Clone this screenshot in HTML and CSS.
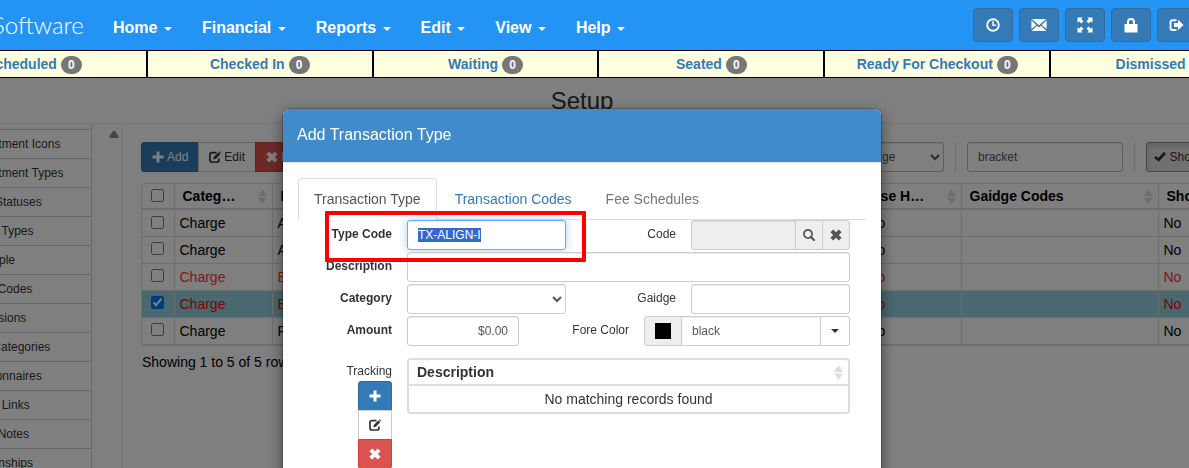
FILE: index.html
```
<!DOCTYPE html>
<html lang="en">
<head>
	<meta charset="UTF-8">
	<title>Setup</title>
	<link rel="stylesheet" href="styles.css">
</head>
<body>
<svg class="sprite" aria-hidden="true">
	<symbol id="plus" viewBox="0 0 12 12"><path d="M4.5 0.5h3v4h4v3h-4v4h-3v-4h-4v-3h4z"/></symbol>
	<symbol id="edit" viewBox="0 0 12 12"><path d="M7.6 1.6H3Q1 1.6 1 3.600V9Q1 11 3 11H8Q10 11 10 9V7.500" fill="none" stroke="currentColor" stroke-width="1.700"/><path d="M4.300 8.400l.6-2.600 4.400-4.400 1.900 1.900-4.400 4.400zM9.800.9l.7-.7 1.500 1.400-.7.9z"/></symbol>
	<symbol id="remove" viewBox="0 0 12 12"><path d="M3.200.4L6 3.200 8.800.4l2.800 2.800L8.800 6l2.800 2.800-2.800 2.800L6 8.800l-2.800 2.800L.4 8.800 3.200 6 .4 3.200z"/></symbol>
	<symbol id="search" viewBox="0 0 12 12"><path d="M5 .9a4.100 4.100 0 1 0 0 8.200A4.100 4.100 0 1 0 5 .9z" fill="none" stroke="currentColor" stroke-width="1.700"/><path d="M8 8l3.200 3.200" stroke="currentColor" stroke-width="2.200" stroke-linecap="round"/></symbol>
	<symbol id="ok" viewBox="0 0 12 12"><path d="M0 6.800l1.800-1.800 2.500 2L9.900 1 12 2.700 4.700 10.700z"/></symbol>
	<symbol id="clock" viewBox="0 0 14 14"><circle cx="7" cy="7" r="5.800" fill="none" stroke="currentColor" stroke-width="1.900"/><path d="M7 3.300V7.200H10" fill="none" stroke="currentColor" stroke-width="1.400"/></symbol>
	<symbol id="mail" viewBox="0 0 16 14"><path d="M.8 1h14.400L8 7.300zM.4 2.200L5.300 7 .4 11zM15.600 2.200L10.700 7l4.900 4zM6 7.700l2 1.700 2-1.700 5.400 5.300H.6z"/></symbol>
	<symbol id="full" viewBox="0 0 16 16"><path d="M.5.5h5.200L4.200 2l2.300 2.300-2.200 2.200L2 4.200.5 5.700zM15.500.5v5.200L14 4.200l-2.300 2.300-2.200-2.200L11.800 2 10.300.5zM.5 15.500v-5.200L2 11.800l2.300-2.300 2.200 2.200L4.200 14l1.500 1.500zM15.500 15.500h-5.200l1.500-1.500-2.300-2.300 2.200-2.200 2.300 2.300 1.500-1.500z"/></symbol>
	<symbol id="lock" viewBox="0 0 14 15"><path d="M3 6V4a4 4 0 0 1 8 0v2h2.500v8.500H.5V6zM5 6h4V4a2 2 0 0 0-4 0z" fill-rule="evenodd"/></symbol>
	<symbol id="logout" viewBox="0 0 14 14"><path d="M7 2.200H3Q1 2.200 1 4.200V10Q1 12 3 12H7" fill="none" stroke="currentColor" stroke-width="1.900"/><path d="M4.500 5h4V1.700L14 7l-5.500 5.300V9h-4z"/></symbol>
	<symbol id="sort" viewBox="0 0 9 15"><path d="M4.500 0L9 7H0zM0 8.500h9L4.500 15z"/></symbol>
</svg>

<header class="top">
	<nav class="navbar">
		<a class="brand" href="#">Software</a>
		<ul class="menu">
			<li><a href="#">Home <b class="caret"></b></a></li>
			<li><a href="#">Financial <b class="caret"></b></a></li>
			<li><a href="#">Reports <b class="caret"></b></a></li>
			<li><a href="#">Edit <b class="caret"></b></a></li>
			<li><a href="#">View <b class="caret"></b></a></li>
			<li><a href="#">Help <b class="caret"></b></a></li>
		</ul>
		<div class="tools">
			<button type="button" class="tool" aria-label="Time clock"><svg width="14" height="14"><use href="#clock"/></svg></button>
			<button type="button" class="tool" aria-label="Messages"><svg width="16" height="14"><use href="#mail"/></svg></button>
			<button type="button" class="tool" aria-label="Full screen"><svg width="16" height="16"><use href="#full"/></svg></button>
			<button type="button" class="tool" aria-label="Lock"><svg width="14" height="15"><use href="#lock"/></svg></button>
			<button type="button" class="tool tool-wide"><svg width="15" height="14"><use href="#logout"/></svg> Logout</button>
		</div>
	</nav>
	<ul class="status">
		<li><a href="#">Scheduled <span class="badge">0</span></a></li>
		<li><a href="#">Checked In <span class="badge">0</span></a></li>
		<li><a href="#">Waiting <span class="badge">0</span></a></li>
		<li><a href="#">Seated <span class="badge">0</span></a></li>
		<li><a href="#">Ready For Checkout <span class="badge">0</span></a></li>
		<li><a href="#">Dismissed <span class="badge">0</span></a></li>
	</ul>
</header>

<main class="page">
	<h1 class="page-title">Setup</h1>
	<div class="columns">
		<ul class="side">
			<li><a href="#">Appointment Icons</a></li>
			<li><a href="#">Appointment Types</a></li>
			<li><a href="#">Claim Statuses</a></li>
			<li><a href="#">Patient Types</a></li>
			<li><a href="#">All People</a></li>
			<li><a href="#">Recall Codes</a></li>
			<li><a href="#">Permissions</a></li>
			<li><a href="#">Form Categories</a></li>
			<li><a href="#">Questionnaires</a></li>
			<li><a href="#">Patient Links</a></li>
			<li><a href="#">Recall Notes</a></li>
			<li><a href="#">Relationships</a></li>
		</ul>
		<div class="scroll"><svg width="10" height="8" viewBox="0 0 10 8"><path d="M4 1.200Q5-.2 6 1.200L9.600 6Q10 8 8.500 8H1.500Q0 8 .4 6z"/></svg></div>
		<section class="content">
			<div class="toolbar">
				<div class="btn-group">
					<button type="button" class="btn btn-primary"><svg width="12" height="12"><use href="#plus"/></svg> Add</button>
					<button type="button" class="btn"><svg width="12" height="12"><use href="#edit"/></svg> Edit</button>
					<button type="button" class="btn btn-danger"><svg width="12" height="12"><use href="#remove"/></svg> Delete</button>
				</div>
				<div class="filters">
					<select class="field filter-type" aria-label="Category filter"><option>Charge</option></select>
					<i class="divider"></i>
					<input class="field filter-text" type="text" value="bracket" aria-label="Search">
					<i class="divider"></i>
					<button type="button" class="btn btn-on"><svg width="12" height="12"><use href="#ok"/></svg> Show All</button>
				</div>
			</div>
			<div class="table-box">
				<table class="grid">
					<colgroup>
						<col class="c-check"><col class="c-cat"><col><col class="c-use"><col class="c-gaidge"><col class="c-show">
					</colgroup>
					<thead>
						<tr>
							<th class="check"><input type="checkbox" aria-label="Select all"></th>
							<th><div class="th">Categ… <svg width="9" height="15"><use href="#sort"/></svg></div></th>
							<th><div class="th">Description</div></th>
							<th><div class="th">Use H… <svg width="9" height="15"><use href="#sort"/></svg></div></th>
							<th><div class="th">Gaidge Codes <svg width="9" height="15"><use href="#sort"/></svg></div></th>
							<th><div class="th">Show</div></th>
						</tr>
					</thead>
					<tbody>
						<tr>
							<td class="check"><input type="checkbox" aria-label="Select row 1"></td>
							<td>Charge</td><td>Add Bracket</td><td>No</td><td></td><td>No</td>
						</tr>
						<tr>
							<td class="check"><input type="checkbox" aria-label="Select row 2"></td>
							<td>Charge</td><td>Add Bracket</td><td>No</td><td></td><td>No</td>
						</tr>
						<tr class="red">
							<td class="check"><input type="checkbox" aria-label="Select row 3"></td>
							<td>Charge</td><td>Bracket</td><td>No</td><td></td><td>No</td>
						</tr>
						<tr class="red selected">
							<td class="check"><input type="checkbox" checked aria-label="Select row 4"></td>
							<td>Charge</td><td>Bracket</td><td>No</td><td></td><td>No</td>
						</tr>
						<tr>
							<td class="check"><input type="checkbox" aria-label="Select row 5"></td>
							<td>Charge</td><td>Fix Bracket</td><td>No</td><td></td><td>No</td>
						</tr>
					</tbody>
				</table>
			</div>
			<p class="paging">Showing 1 to 5 of 5 rows</p>
		</section>
	</div>
</main>

<div class="backdrop">
	<div class="modal" role="dialog" aria-labelledby="modal-title">
		<h2 class="modal-title" id="modal-title">Add Transaction Type</h2>
		<div class="modal-body">
			<ul class="tabs">
				<li><a class="active" href="#">Transaction Type</a></li>
				<li><a href="#">Transaction Codes</a></li>
				<li><a class="off" href="#">Fee Schedules</a></li>
			</ul>
			<form class="form">
				<div class="row">
					<label class="required" for="type-code">Type Code</label>
					<div class="cells">
						<input class="field w-col" id="type-code" type="text" value="TX-ALIGN-I">
						<label for="code">Code</label>
						<div class="group w-col">
							<input class="field" id="code" type="text" disabled>
							<button type="button" class="addon" aria-label="Search code"><svg width="12" height="12"><use href="#search"/></svg></button>
							<button type="button" class="addon" aria-label="Clear code"><svg width="12" height="12"><use href="#remove"/></svg></button>
						</div>
					</div>
					<div class="mark"></div>
				</div>
				<div class="row">
					<label class="required" for="description">Description</label>
					<div class="cells"><input class="field w-full" id="description" type="text"></div>
				</div>
				<div class="row">
					<label class="required" for="category">Category</label>
					<div class="cells">
						<select class="field w-col" id="category"><option></option></select>
						<label for="gaidge">Gaidge</label>
						<input class="field w-col" id="gaidge" type="text">
					</div>
				</div>
				<div class="row">
					<label class="required" for="amount">Amount</label>
					<div class="cells">
						<input class="field amount" id="amount" type="text" value="$0.00">
						<label for="fore-color">Fore Color</label>
						<div class="group color">
							<span class="addon swatch"><i></i></span>
							<input class="field" id="fore-color" type="text" value="black">
							<button type="button" class="addon white" aria-label="Pick color"><b class="caret"></b></button>
						</div>
					</div>
				</div>
				<div class="row tracking">
					<div class="track-side">
						<span>Tracking</span>
						<div class="btn-stack">
							<button type="button" class="btn btn-primary" aria-label="Add tracking"><svg width="12" height="12"><use href="#plus"/></svg></button>
							<button type="button" class="btn" aria-label="Edit tracking"><svg width="12" height="12"><use href="#edit"/></svg></button>
							<button type="button" class="btn btn-danger" aria-label="Remove tracking"><svg width="12" height="12"><use href="#remove"/></svg></button>
						</div>
					</div>
					<div class="cells">
						<div class="table-box">
							<table class="grid">
								<thead>
									<tr><th><div class="th">Description <svg width="9" height="15"><use href="#sort"/></svg></div></th></tr>
								</thead>
								<tbody>
									<tr><td class="empty">No matching records found</td></tr>
								</tbody>
							</table>
						</div>
					</div>
				</div>
			</form>
		</div>
	</div>
</div>
<script>
	var code = document.getElementById("type-code");
	code.focus();
	code.select();
</script>
</body>
</html>
```
FILE: styles.css
```
*{
	box-sizing:border-box;
}
html,body{
	height:100%;
	overflow:hidden;
}
body{
	margin:0;
	font:14px/20px "Liberation Sans", Arial, sans-serif;
	color:#333;
	background:#fff;
}
ul,h1,h2,p{
	margin:0;
	padding:0;
}
ul{
	list-style:none;
}
a{
	color:#337ab7;
	text-decoration:none;
}
svg{
	fill:currentColor;
	flex:none;
}
button,input,select{
	font-family:inherit;
}
.sprite{
	position:absolute;
	width:0;
	height:0;
}
.caret{
	display:inline-block;
	margin-left:2px;
	vertical-align:middle;
	border-top:4px solid;
	border-left:4px solid transparent;
	border-right:4px solid transparent;
}

/* top bar */
.top{
	position:relative;
	z-index:3;
	overflow:hidden;
}
.navbar{
	display:flex;
	align-items:center;
	height:50px;
	background:#2494f4;
}
.brand{
	margin-left:-8px;
	width:106px;
	font:300 24px/50px Lato, "Liberation Sans", sans-serif;
	color:#fff;
}
.menu{
	display:flex;
}
.menu a{
	display:block;
	padding:18px 15px 12px;
	font-size:16px;
	font-weight:bold;
	color:#fff;
}
.tools{
	display:flex;
	gap:6px;
	margin-left:auto;
	margin-right:-54px;
}
.tool{
	display:flex;
	align-items:center;
	justify-content:center;
	gap:4px;
	width:40px;
	height:34px;
	padding:0;
	border:1px solid #2e6da4;
	border-radius:4px;
	background:#337ab7;
	color:#fff;
	font-size:14px;
}
.tool-wide{
	justify-content:flex-start;
	width:86px;
	padding-left:11px;
}
.status{
	display:flex;
	margin:0 -88px 0 -78px;
	border-top:1px solid #000;
	border-bottom:1px solid #000;
	background:#ffffe0;
}
.status li{
	flex:1 1 0;
	border-right:2px solid #000;
	text-align:center;
	line-height:26px;
	font-weight:bold;
}
.badge{
	display:inline-block;
	min-width:21px;
	padding:3px 7px;
	border-radius:10px;
	background:#777;
	color:#fff;
	font-size:12px;
	line-height:12px;
	text-align:center;
	vertical-align:middle;
}

/* page */
.page{
	overflow:hidden;
}
.page-title{
	padding:8px 25px 8px 0;
	border-bottom:1px solid #eee;
	font-size:24px;
	font-weight:normal;
	line-height:29px;
	text-align:center;
}
.columns{
	display:flex;
}
.side{
	width:131px;
	margin-left:-39px;
	padding-top:5px;
	border-right:1px solid #ccc;
	font-size:12px;
}
.side li{
	border-top:1px solid #ccc;
	line-height:28px;
	white-space:nowrap;
}
.side a{
	color:#333;
}
.scroll{
	width:31px;
	padding:5px 0 0 17px;
	border-right:1px solid #eee;
	color:#8b8b8b;
	line-height:8px;
}
.content{
	flex:1;
	min-width:0;
	margin-right:-35px;
	padding:18px 0 0 18px;
}
.toolbar{
	display:flex;
	justify-content:space-between;
	align-items:center;
	margin-bottom:11px;
}
.filters{
	display:flex;
	align-items:center;
	gap:11px;
}
.divider{
	width:1px;
	height:30px;
	background:#ddd;
}
.btn-group{
	display:flex;
}
.btn{
	display:flex;
	align-items:center;
	justify-content:center;
	gap:3px;
	height:30px;
	padding:0 10px;
	border:1px solid #ccc;
	border-radius:3px;
	background:#fff;
	color:#333;
	font-size:12px;
}
.btn-group .btn{
	margin-right:-1px;
	border-radius:0;
}
.btn-group .btn:first-child{
	border-radius:3px 0 0 3px;
}
.btn-primary{
	border-color:#2e6da4;
	background:#337ab7;
	color:#fff;
}
.btn-danger{
	border-color:#d43f3a;
	background:#d9534f;
	color:#fff;
}
.btn-on{
	width:78px;
	border-color:#8c8c8c;
	background:#e0e0e0;
	box-shadow:inset 0 3px 5px rgba(0,0,0,.125);
	white-space:nowrap;
}
.field{
	min-width:0;
	height:30px;
	padding:5px 10px;
	border:1px solid #ccc;
	border-radius:3px;
	background:#fff;
	color:#555;
	font-size:12px;
	line-height:18px;
	box-shadow:inset 0 1px 1px rgba(0,0,0,.075);
}
select.field{
	padding:5px;
}
.field:focus{
	border-color:#66afe9;
	outline:0;
	box-shadow:inset 0 1px 1px rgba(0,0,0,.075), 0 0 8px rgba(102,175,233,.6);
}
.field::selection{
	background:#3367d1;
	color:#fff;
}
.field:disabled{
	background:#eee;
}
.filter-type{
	width:98px;
	border-color:#bbb;
}
.filter-text{
	width:156px;
	border-color:#bbb;
}

/* tables */
.table-box{
	width:100%;
	border:1px solid #ddd;
	border-radius:4px;
}
.grid{
	width:100%;
	table-layout:fixed;
	border-collapse:collapse;
}
.c-check{
	width:32px;
}
.c-cat{
	width:98px;
}
.c-use{
	width:99px;
}
.c-gaidge{
	width:197px;
}
.c-show{
	width:65px;
}
.grid th,.grid td{
	padding:0 5px;
	border:1px solid #ddd;
	text-align:left;
	white-space:nowrap;
	overflow:hidden;
}
.grid th{
	height:25px;
	padding:0 5px 0 8px;
	border-top:0;
	border-bottom-width:2px;
}
.grid td{
	height:27px;
}
.grid tr > :first-child{
	border-left:0;
}
.grid tr > :last-child{
	border-right:0;
}
.grid .check{
	padding:0 0 2px;
	text-align:center;
	line-height:13px;
}
.grid .empty{
	text-align:center;
}
.check input{
	margin:0;
	vertical-align:middle;
}
.th{
	display:flex;
	justify-content:space-between;
	align-items:center;
}
.th svg{
	color:#ddd;
}
.content .grid{
	color:#000;
}
.content .grid .red{
	color:#ff3030;
}
.content .grid .selected{
	background:#94d0e0;
	color:#f00;
}
.paging{
	padding:6px 1px;
	color:#000;
}

/* dialog */
.backdrop{
	position:fixed;
	inset:0;
	z-index:2;
	padding:109px 25px 0 0;
	background:rgba(0,0,0,.5);
}
.modal{
	max-width:598px;
	margin:0 auto;
	border-radius:6px;
	background:#fff;
	box-shadow:0 0 0 1px rgba(0,0,0,.2), 0 5px 15px rgba(0,0,0,.5);
}
.modal-title{
	padding:15px 14px 17px;
	border-bottom:1px solid #e5e5e5;
	border-radius:6px 6px 0 0;
	background:#428bca;
	background-clip:padding-box;
	color:#fff;
	font-size:16px;
	font-weight:normal;
	line-height:21px;
}
.modal-body{
	padding:15px 15px 30px;
}
.tabs{
	display:flex;
	gap:2px;
	border-bottom:1px solid #ddd;
}
.tabs li{
	margin-bottom:-1px;
}
.tabs a{
	display:block;
	padding:10px 15px;
	border:1px solid transparent;
	border-radius:4px 4px 0 0;
}
.tabs .active{
	border-color:#ddd #ddd #fff;
	background:#fff;
	color:#555;
}
.tabs .off{
	color:#777;
}
.form{
	display:flex;
	flex-direction:column;
	gap:2px;
	padding-right:16px;
	font-size:12px;
}
.row{
	position:relative;
	display:flex;
	gap:15px;
}
.row label{
	flex:1;
	padding-top:5px;
	line-height:18px;
	text-align:right;
	white-space:nowrap;
}
.row > label,.track-side{
	flex:none;
	width:94px;
}
.row .required{
	font-weight:bold;
}
.cells{
	display:flex;
	flex:1;
	gap:15px;
}
.w-col{
	width:159px;
}
.w-full{
	width:100%;
}
.amount{
	width:112px;
	text-align:right;
}
.group{
	display:flex;
}
.group .field{
	flex:1;
	border-radius:0;
}
.group .field:first-child{
	border-radius:3px 0 0 3px;
}
.color{
	width:206px;
}
.addon{
	display:flex;
	align-items:center;
	justify-content:center;
	width:28px;
	height:30px;
	margin-left:-1px;
	padding:0;
	border:1px solid #ccc;
	background:#eee;
	color:#555;
}
.addon:last-child{
	border-radius:0 3px 3px 0;
}
.addon.white{
	width:30px;
	background:#fff;
	color:#333;
}
.addon .caret{
	margin:0;
}
.swatch{
	width:38px;
	margin:0 -1px 0 0;
	border-radius:3px 0 0 3px;
}
.swatch i{
	width:16px;
	height:16px;
	background:#000;
}
.tracking{
	padding-top:10px;
}
.tracking .table-box{
	align-self:flex-start;
	border-width:2px;
	font-size:14px;
}
.tracking .grid tr:last-child td{
	border-bottom:0;
}
.track-side{
	display:flex;
	flex-direction:column;
	align-items:flex-end;
	padding-top:4px;
	line-height:19px;
}
.btn-stack{
	width:34px;
}
.btn-stack .btn{
	width:100%;
	margin-bottom:-1px;
	border-radius:0;
}
.btn-stack .btn:first-child{
	border-radius:3px 3px 0 0;
}
.btn-stack .btn:last-child{
	border-radius:0 0 3px 3px;
}

/* callout round the code field */
.mark{
	position:absolute;
	top:-9px;
	left:27px;
	z-index:1;
	width:261px;
	height:51px;
	border:4px solid #f00;
	border-radius:1px;
	pointer-events:none;
}
```
